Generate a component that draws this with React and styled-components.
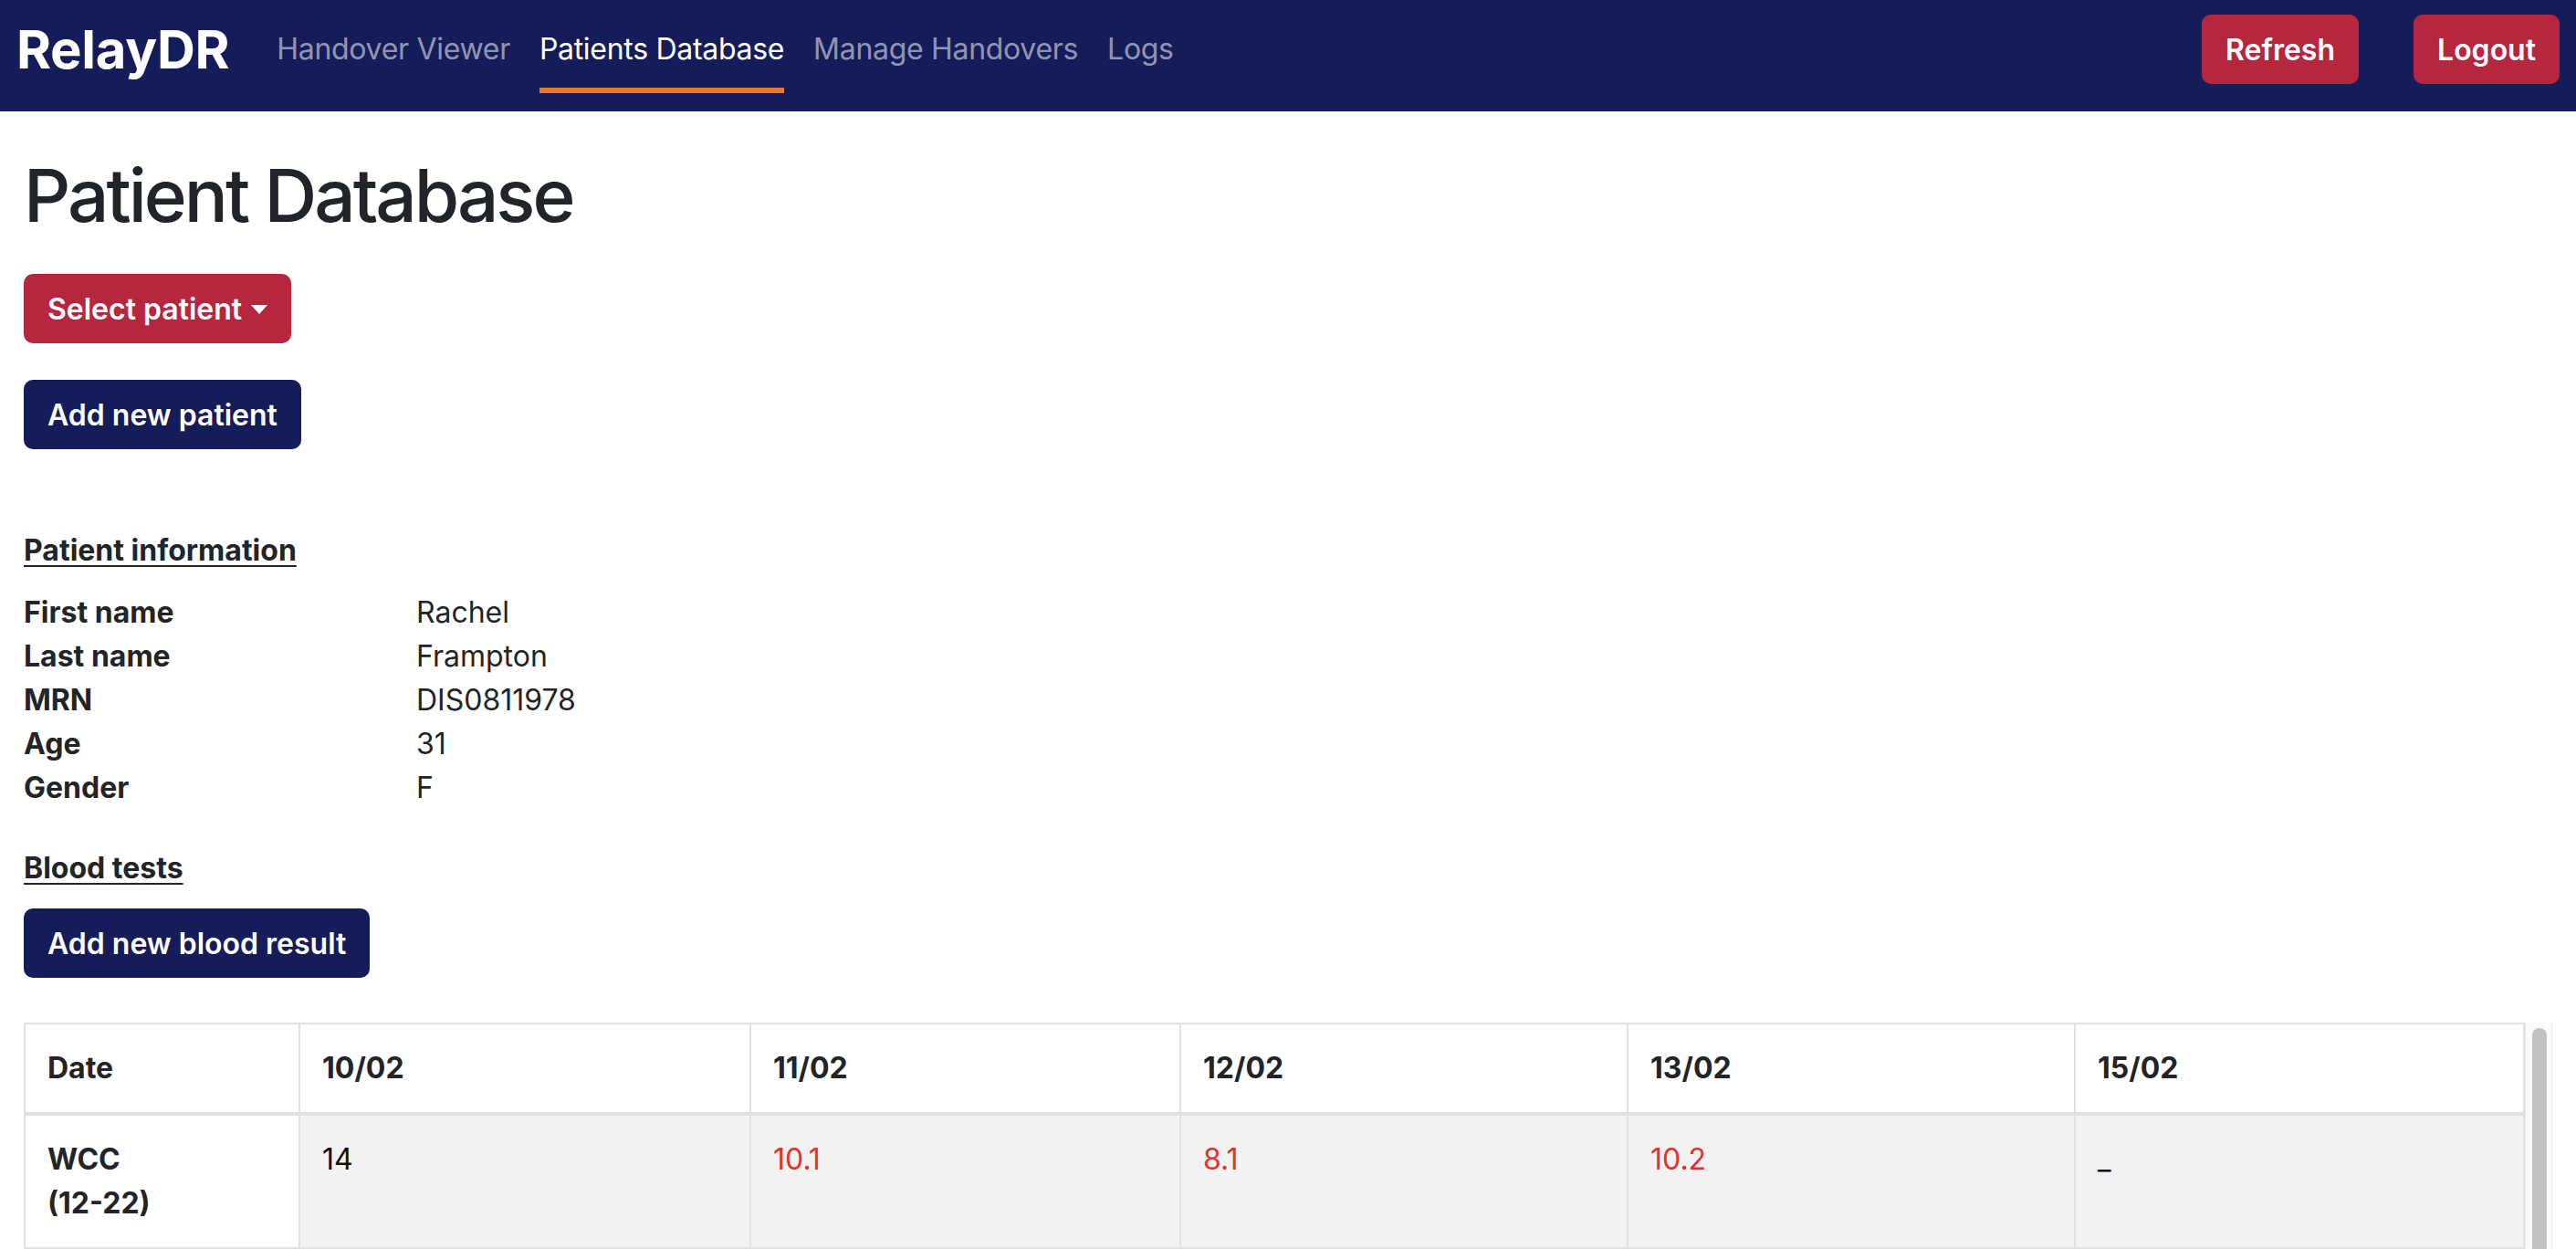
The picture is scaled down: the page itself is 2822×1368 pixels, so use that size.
import React from "react";
import styled, { createGlobalStyle } from "styled-components";

const GlobalStyle = createGlobalStyle`
  html, body {
    margin: 0;
    padding: 0;
    background: #ffffff;
    overflow: hidden;
  }
  body {
    font-family: "Inter", "Liberation Sans", sans-serif;
    color: #212529;
  }
  * {
    box-sizing: border-box;
  }
`;

const NAVY = "#151c5a";
const RED = "#b7263f";

const links = [
  { label: "Handover Viewer" },
  { label: "Patients Database", active: true },
  { label: "Manage Handovers" },
  { label: "Logs" },
];

const info = [
  ["First name", "Rachel"],
  ["Last name", "Frampton"],
  ["MRN", "DIS0811978"],
  ["Age", "31"],
  ["Gender", "F"],
];

const dates = ["10/02", "11/02", "12/02", "13/02", "15/02"];

// second item true = out of range, shown in red
const bloods = [
  { name: "WCC", range: "(12-22)", values: [["14"], ["10.1", true], ["8.1", true], ["10.2", true], ["_"]] },
  { name: "Hb", range: "(115-165)", values: [["121"], ["118"], ["109", true], ["112", true], ["_"]] },
  { name: "Plt", range: "(150-400)", values: [["210"], ["198"], ["176"], ["181"], ["_"]] },
  { name: "CRP", range: "(0-5)", values: [["4"], ["12", true], ["18", true], ["9", true], ["_"]] },
];

const App = () => {
  return (
    <>
      <GlobalStyle />
      <Navbar>
        <Brand>RelayDR</Brand>
        <NavList>
          {links.map((l) => (
            <NavLink key={l.label} $active={l.active}>
              {l.label}
            </NavLink>
          ))}
        </NavList>
        <NavActions>
          <Button $variant="red">Refresh</Button>
          <Button $variant="red">Logout</Button>
        </NavActions>
      </Navbar>

      <Main>
        <Title>Patient Database</Title>
        <ButtonStack>
          <Button $variant="red">
            Select patient
            <Caret />
          </Button>
          <Button $variant="navy">Add new patient</Button>
        </ButtonStack>

        <SectionHeading $top={87}>Patient information</SectionHeading>
        <InfoGrid>
          {info.map(([label, value]) => (
            <React.Fragment key={label}>
              <InfoLabel>{label}</InfoLabel>
              <InfoValue>{value}</InfoValue>
            </React.Fragment>
          ))}
        </InfoGrid>

        <SectionHeading $top={40}>Blood tests</SectionHeading>
        <Button $variant="navy">Add new blood result</Button>

        <TableWrap>
          <Table>
            <colgroup>
              <col style={{ width: 301 }} />
              <col style={{ width: 494 }} />
              <col style={{ width: 471 }} />
              <col style={{ width: 490 }} />
              <col style={{ width: 490 }} />
              <col />
            </colgroup>
            <thead>
              <tr>
                <HeadCell>Date</HeadCell>
                {dates.map((d) => (
                  <HeadCell key={d}>{d}</HeadCell>
                ))}
              </tr>
            </thead>
            <tbody>
              {bloods.map((b) => (
                <tr key={b.name}>
                  <RowLabel>
                    {b.name}
                    <br />
                    {b.range}
                  </RowLabel>
                  {b.values.map(([v, low], i) => (
                    <ValueCell key={i} $low={low}>
                      {v}
                    </ValueCell>
                  ))}
                </tr>
              ))}
            </tbody>
          </Table>
          <ScrollTrack>
            <ScrollThumb />
          </ScrollTrack>
        </TableWrap>
      </Main>
    </>
  );
};

const Navbar = styled.nav`
  display: flex;
  align-items: center;
  height: 122px;
  padding: 0 18px 14px 18px;
  background: ${NAVY};
`;

const Brand = styled.div`
  font-size: 58px;
  font-weight: 700;
  line-height: 1;
  color: #ffffff;
  letter-spacing: -0.3px;
  margin-right: 36px;
`;

const NavList = styled.div`
  display: flex;
  align-items: center;
`;

const NavLink = styled.a`
  margin: 0 16px;
  padding: 24px 0 18px;
  font-size: 32px;
  line-height: 48px;
  letter-spacing: -0.3px;
  color: ${(p) => (p.$active ? "#ffffff" : "rgba(255, 255, 255, 0.55)")};
  border-bottom: 6px solid ${(p) => (p.$active ? "#e07a3a" : "transparent")};
  cursor: pointer;
`;

const NavActions = styled.div`
  display: flex;
  gap: 60px;
  margin-left: auto;
`;

const Button = styled.button`
  display: inline-flex;
  align-items: center;
  height: 76px;
  padding: 0 26px;
  border: none;
  border-radius: 10px;
  font-family: inherit;
  font-size: 32px;
  font-weight: 600;
  color: #ffffff;
  background: ${(p) => (p.$variant === "navy" ? NAVY : RED)};
  cursor: pointer;
`;

const Caret = styled.span`
  display: inline-block;
  margin-left: 10px;
  margin-top: 2px;
  border-top: 10px solid #ffffff;
  border-left: 9.5px solid transparent;
  border-right: 9.5px solid transparent;
`;

const Main = styled.main`
  padding: 44px 26px 0;
`;

const Title = styled.h1`
  margin: 0 0 38px;
  font-size: 80px;
  font-weight: 500;
  line-height: 96px;
  letter-spacing: -3px;
  color: #212529;
`;

const ButtonStack = styled.div`
  display: flex;
  flex-direction: column;
  align-items: flex-start;
  gap: 40px;
`;

const SectionHeading = styled.h6`
  margin: ${(p) => p.$top}px 0 20px;
  font-size: 32px;
  font-weight: 700;
  line-height: 48px;
  text-decoration: underline;
  text-underline-offset: 5px;
  text-decoration-thickness: 2px;
`;

const InfoGrid = styled.div`
  display: grid;
  grid-template-columns: 430px 1fr;
  font-size: 32px;
  line-height: 48px;
`;

const InfoLabel = styled.div`
  font-weight: 700;
`;

const InfoValue = styled.div`
  font-weight: 400;
`;

const TableWrap = styled.div`
  display: flex;
  margin-top: 49px;
`;

const Table = styled.table`
  flex: 1;
  table-layout: fixed;
  border-collapse: collapse;
  font-size: 32px;
  line-height: 48px;
  border: 2px solid #dee2e6;
`;

const HeadCell = styled.th`
  padding: 24px;
  text-align: left;
  font-weight: 700;
  background: #ffffff;
  border: 2px solid #dee2e6;
  border-bottom: 4px solid #dee2e6;
`;

const RowLabel = styled.th`
  padding: 24px;
  text-align: left;
  vertical-align: top;
  font-weight: 700;
  background: #ffffff;
  border: 2px solid #dee2e6;
`;

const ValueCell = styled.td`
  padding: 24px;
  vertical-align: top;
  background: #f2f2f2;
  border: 2px solid #dee2e6;
  color: ${(p) => (p.$low ? "#e4312b" : "#111111")};
`;

const ScrollTrack = styled.div`
  width: 30px;
  flex-shrink: 0;
  padding: 6px 5px 0 7px;
  background: #fafafa;
  border-left: 1px solid #e8e8e8;
  border-right: 1px solid #ededed;
`;

const ScrollThumb = styled.div`
  height: 620px;
  border-radius: 8px;
  background: #c1c1c1;
`;

export default App;
